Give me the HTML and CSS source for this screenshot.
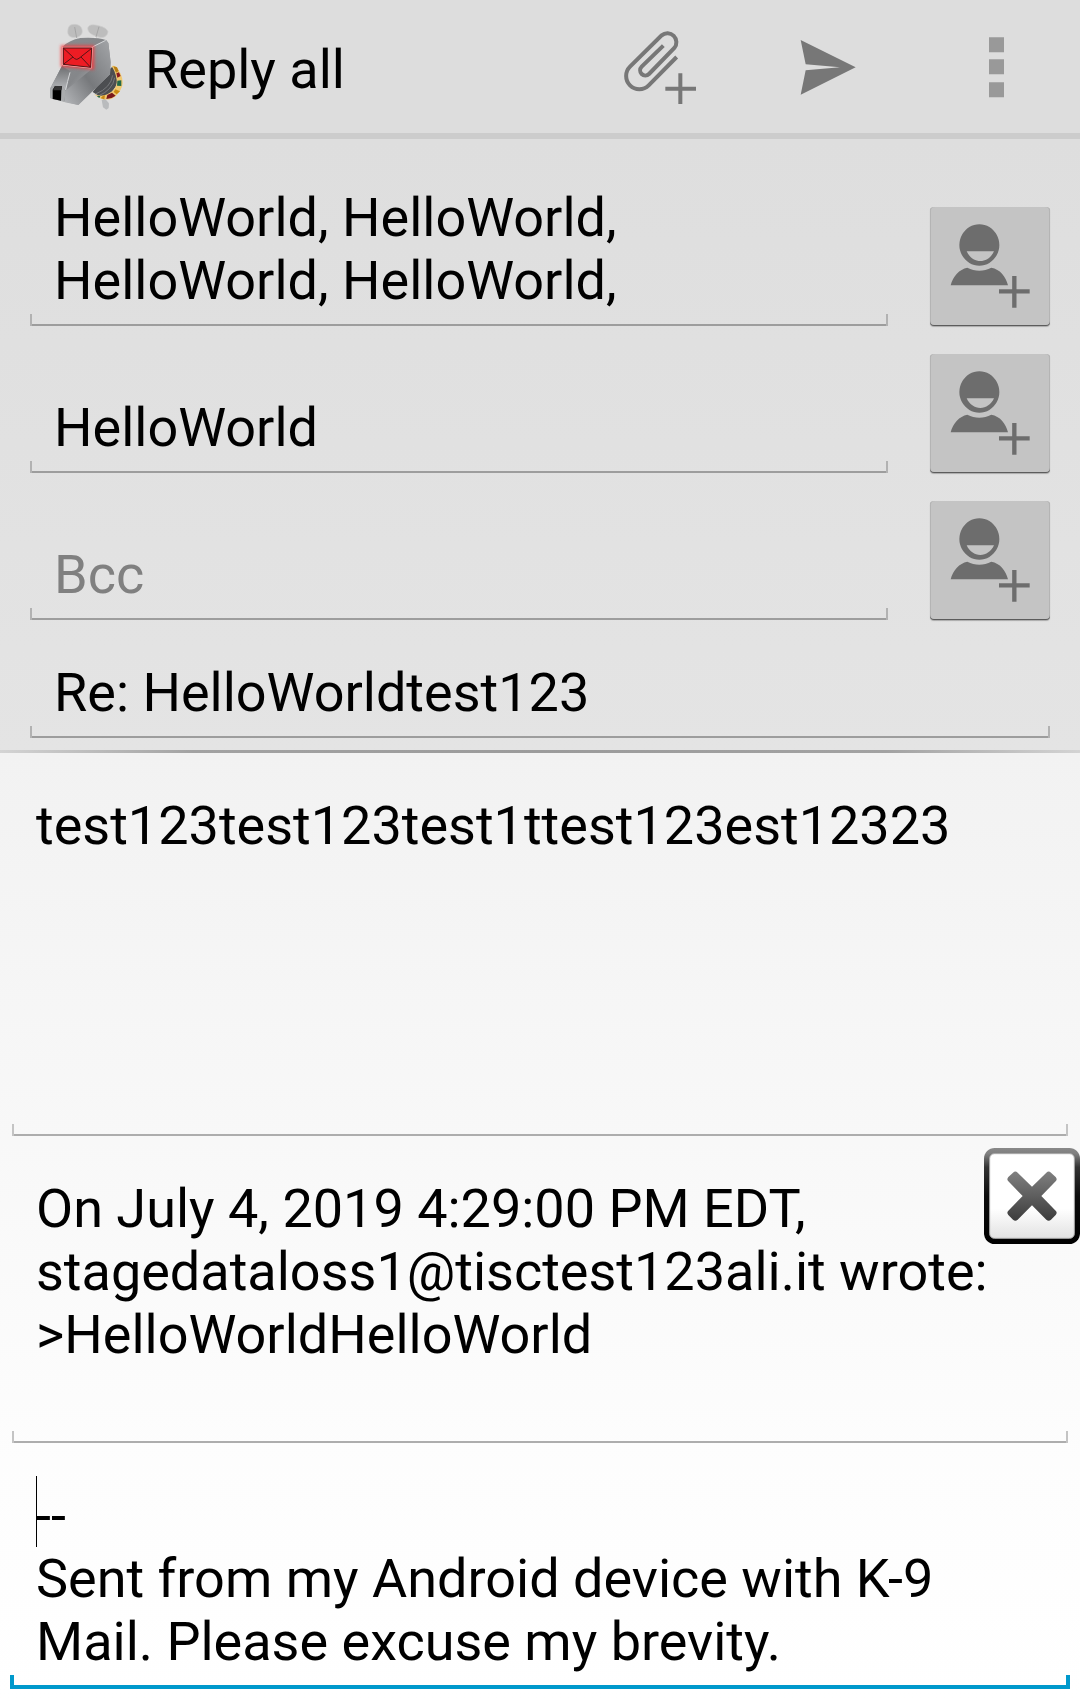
FILE: index.html
```html
<!DOCTYPE html>
<html lang="en">
<head>
<meta charset="utf-8">
<meta name="viewport" content="width=device-width, initial-scale=1">
<title>Reply all</title>
<link rel="stylesheet" href="styles.css">
</head>
<body>
<svg width="0" height="0" class="defs" aria-hidden="true">
  <symbol id="add-contact" viewBox="90 51 360 357">
    <path fill="#6d6d6d" fill-rule="evenodd" d="M238 103a60 62 0 1 0 .1 0zM200 184H282C274 202 258 213 241 213S208 202 200 184z"/>
    <path fill="#6d6d6d" d="M152 286C159 258 178 238 202 233C225 245 251 245 274 233C300 238 317 258 324 286z"/>
    <path stroke="#6d6d6d" stroke-width="13" fill="none" d="M297 304H389M343 258V353"/>
  </symbol>
</svg>
<header class="bar">
  <svg class="logo" viewBox="48 27 240 276" role="img" aria-label="K-9 Mail">
    <defs>
      <linearGradient id="head" x1="0" y1="0" x2="1" y2="1"><stop offset="0" stop-color="#8a8c8f"/><stop offset=".5" stop-color="#85878a"/><stop offset=".75" stop-color="#a6a8ab"/><stop offset="1" stop-color="#77797c"/></linearGradient>
      <linearGradient id="side" x1="0" y1="1" x2="1" y2="0"><stop offset="0" stop-color="#b4b6b9"/><stop offset=".45" stop-color="#77797c"/><stop offset="1" stop-color="#a4a6a9"/></linearGradient>
      <linearGradient id="snout" x1="0" y1="0" x2="0" y2="1"><stop offset="0" stop-color="#6c6e70"/><stop offset="1" stop-color="#b8babd"/></linearGradient>
      <filter id="glow" x="-40%" y="-40%" width="180%" height="180%"><feGaussianBlur stdDeviation="5"/></filter>
    </defs>
    <g fill="#bdbdbd" stroke="#cfcfcf" stroke-width="2">
      <path d="M114 57C116 44 130 41 142 44C154 48 159 58 156 70C151 82 134 86 121 80C113 76 112 67 114 57z"/>
      <path d="M173 54C177 43 188 43 201 46C217 50 230 54 234 65C233 78 220 86 206 81C191 77 173 71 173 54z"/>
    </g>
    <path d="M134 51L142 94M207 50L193 98" stroke="#999" stroke-width="2" fill="none"/>
    <path d="M140 85V95M196 81L192 99" stroke="#eee" stroke-width="4"/>
    <path d="M215 270L225 266L237 280L236 294L229 299L219 292z" fill="#b9bbbd"/>
    <path d="M236 180L247 170Q264 190 262 215Q255 250 213 262L188 246z" fill="#4c4e51"/>
    <path d="M248 196Q243 233 197 252M254 203Q248 240 205 258" stroke="#8b8d90" stroke-width="2" fill="none"/>
    <path d="M245 168Q258 165 265 179Q283 205 276 230Q266 256 245 266Q218 275 192 253Q214 261 232 253Q255 242 260 222Q262 196 245 168z" fill="#f0c972"/>
    <path d="M250 169L261 172L266 183L258 188z" fill="#b87d13"/>
    <path d="M259 190L267 187L272 198L262 203z" fill="#8a1b20"/>
    <path d="M262 212L274 211L274 228L261 227z" fill="#22684a"/>
    <path d="M256 238L270 244L260 253L251 246z" fill="#c98a12"/>
    <path d="M246 248L257 257L245 264L229 267L232 255z" fill="#7a181c"/>
    <path d="M219 257L225 256L223 268L212 265z" fill="#c98a12"/>
    <path d="M203 257L211 258L208 264L201 259z" fill="#22684a"/>
    <path d="M98 110Q118 90 151 84Q200 81 228 90L235 99L242 157L240 193L145 285L60 264L61 235L97 166z" fill="url(#head)"/>
    <path d="M186 111L228 90L235 99L242 157L240 193L145 285L104 277L106 242L188 175z" fill="url(#side)"/>
    <path d="M61 235L96 168L120 184L107 241L97 229L74 227z" fill="url(#snout)"/>
    <path d="M120 187Q112 216 107 240M187 111L227 91" stroke="#d5d7d9" stroke-width="3" fill="none"/>
    <path d="M60 264L61 237L72 228L98 229L107 243L103 276z" fill="#aaacae"/>
    <path d="M68 267V239L75 228H96L94 241L93 272z" fill="#000"/>
    <path d="M75 228H96L94 241H69z" fill="#333"/>
    <path d="M92 106H193V179L92 170z" fill="#ff3038" opacity=".75" filter="url(#glow)"/>
    <path d="M98 112H187L184 174L98 165z" fill="#ed1c24" stroke="#ffb0b0" stroke-width="3"/>
    <path d="M100 114H185L182 172L100 163zL134 146Q140 151 147 145L185 115M100 163L129 141M182 172L153 141" fill="none" stroke="#551416" stroke-width="3"/>
  </svg>
  <h1 class="title">Reply all</h1>
  <nav class="actions" aria-label="Message actions">
    <button type="button" class="action" aria-label="Add attachment">
      <svg viewBox="60 50 240 240" fill="none" stroke="#777" stroke-width="12">
        <path d="M230 140L146 225A39 39 0 0 1 90 169L185 75A27 27 0 0 1 223 113L147 191A15 15 0 0 1 125 169L190 106"/>
        <path d="M196 235H288M241 189V281"/>
      </svg>
    </button>
    <button type="button" class="action" aria-label="Send">
      <svg viewBox="564 50 240 240">
        <path fill="#777" d="M602 89L767 171L602 253L617 180L720 171L617 162z"/>
      </svg>
    </button>
    <button type="button" class="action" aria-label="More options">
      <svg viewBox="1068 50 240 240">
        <path fill="#999" d="M1167 81h45v45h-45zM1167 147h45v45h-45zM1167 216h45v45h-45z"/>
      </svg>
    </button>
  </nav>
</header>
<main>
  <form class="compose">
    <section class="recipients">
      <div class="row">
        <textarea class="field" rows="2" aria-label="To" spellcheck="false">HelloWorld, HelloWorld, HelloWorld, HelloWorld,</textarea>
        <button type="button" class="contact" aria-label="Add To contact"><svg><use href="#add-contact"/></svg></button>
      </div>
      <div class="row">
        <input class="field" type="text" aria-label="Cc" value="HelloWorld">
        <button type="button" class="contact" aria-label="Add Cc contact"><svg><use href="#add-contact"/></svg></button>
      </div>
      <div class="row">
        <input class="field" type="text" aria-label="Bcc" placeholder="Bcc">
        <button type="button" class="contact" aria-label="Add Bcc contact"><svg><use href="#add-contact"/></svg></button>
      </div>
      <div class="row">
        <input class="field" type="text" aria-label="Subject" value="Re: HelloWorldtest123">
      </div>
    </section>
    <section class="content">
      <textarea class="field message" rows="5" aria-label="Message text" spellcheck="false">test123test123test1ttest123est12323</textarea>
      <div class="quote">
        <textarea class="field" rows="4" aria-label="Quoted text" spellcheck="false">On July 4, 2019 4:29:00 PM EDT, stagedataloss1@tisctest123ali.it wrote:
&gt;HelloWorldHelloWorld
</textarea>
        <button type="button" class="close" aria-label="Remove quoted text">
          <svg viewBox="72 114 288 288">
            <defs>
              <linearGradient id="frame" x1="0" y1="0" x2="0" y2="1"><stop offset="0" stop-color="#888"/><stop offset=".06" stop-color="#808080"/><stop offset=".2" stop-color="#333"/><stop offset=".5" stop-color="#0c0c0c"/><stop offset="1" stop-color="#000"/></linearGradient>
              <linearGradient id="face" x1="0" y1="0" x2="0" y2="1"><stop offset=".65" stop-color="#fff"/><stop offset="1" stop-color="#e2e2e2"/></linearGradient>
              <linearGradient id="cross" gradientUnits="userSpaceOnUse" x1="0" y1="184" x2="0" y2="332"><stop offset="0" stop-color="#808080"/><stop offset="1" stop-color="#3c3c3c"/></linearGradient>
            </defs>
            <rect x="72" y="114" width="288" height="288" rx="32" fill="url(#frame)"/>
            <rect x="89" y="131" width="254" height="254" rx="14" fill="url(#face)" stroke="#aaa" stroke-width="3"/>
            <path d="M159 188Q166 181 173 188L216 230L259 188Q266 181 273 188L287 201Q293 208 287 214L244 258L287 302Q293 308 287 315L273 329Q266 335 259 329L216 286L173 329Q166 335 159 329L145 315Q139 308 145 302L188 258L145 214Q139 208 145 201z" fill="url(#cross)"/>
          </svg>
        </button>
      </div>
      <div class="signature">
        <textarea class="field active" rows="3" aria-label="Signature" spellcheck="false">--
Sent from my Android device with K-9 Mail. Please excuse my brevity.</textarea>
        <span class="caret"></span>
      </div>
    </section>
  </form>
</main>
</body>
</html>
```
FILE: styles.css
```css
* {
  box-sizing: border-box;
}

body {
  margin: 0;
  background: #fff;
  color: #000;
  font-family: Roboto, sans-serif;
  font-size: 54px;
  line-height: 63px;
}

button {
  border: 0;
  padding: 0;
  background: none;
  cursor: pointer;
}

svg {
  display: block;
}

.defs {
  position: absolute;
}

.bar {
  display: flex;
  align-items: center;
  min-height: 139px;
  padding-left: 46px;
  background: #ddd;
  border-bottom: 6px solid #ccc;
}

.logo {
  flex: none;
  width: 80px;
  height: 92px;
  margin-bottom: 4px;
}

.title {
  flex: 1;
  margin: 0;
  padding: 6px 0 0 19px;
  font-size: 54px;
  font-weight: 400;
}

.actions {
  display: flex;
}

.action {
  display: flex;
  align-items: center;
  justify-content: center;
  width: 168px;
  height: 132px;
}

.action svg {
  width: 80px;
  height: 80px;
}

.recipients {
  display: flex;
  flex-direction: column;
  gap: 28px;
  padding: 34px 30px 12px;
  background: linear-gradient(#dedede, #e4e4e4);
}

/* The subject row has no button, so its own height sets the row. */
.row {
  display: flex;
  align-items: flex-end;
  gap: 42px;
}

/* Bracket underline: two end ticks and a line along the bottom edge. */
.field {
  --line: #9d9d9d;
  --tick: #b2b2b2;
  --thick: 2px;
  --rise: 12px;
  display: block;
  flex: 1;
  width: 100%;
  min-width: 0;
  margin: 0;
  padding: 13px 24px 14px;
  border: 0;
  border-radius: 0;
  outline: 0;
  resize: none;
  overflow: hidden;
  color: #000;
  font: inherit;
  background:
    linear-gradient(var(--tick), var(--tick)) left bottom / var(--thick) var(--rise) no-repeat,
    linear-gradient(var(--tick), var(--tick)) right bottom / var(--thick) var(--rise) no-repeat,
    linear-gradient(var(--line), var(--line)) left bottom / 100% var(--thick) no-repeat;
}

input.field {
  height: 90px;
}

.field::placeholder {
  color: #808080;
  opacity: 1;
}

.contact {
  flex: none;
  width: 120px;
  height: 119px;
  border-radius: 4px;
  background: #c4c4c4;
  box-shadow: inset 0 -1px 0 #5c5c5c, inset 1px 0 0 #b4b4b4, inset -1px 0 0 #b4b4b4, 0 1px 1px #aaa;
}

.contact svg {
  width: 100%;
  height: 100%;
}

.content {
  padding: 28px 12px 10px;
  border-top: 3px solid;
  border-image: linear-gradient(90deg, #d4d4d4, #a2a2a2 18%, #9b9b9b 50%, #a2a2a2 82%, #d4d4d4) 1;
  background: linear-gradient(#f2f2f2, #fdfdfd 75%, #fff);
}

.content .field {
  --line: #adadad;
  --tick: #c4c4c4;
}

.content .message {
  padding-bottom: 27px;
}

.quote {
  position: relative;
  margin: 28px 0;
}

.close {
  position: absolute;
  top: -16px;
  right: -12px;
  width: 96px;
  height: 96px;
}

.close svg {
  width: 96px;
  height: 96px;
}

.signature {
  position: relative;
  margin: 0 -2px;
}

.content .active {
  --line: #0099cc;
  --tick: #0099cc;
  --thick: 4px;
  --rise: 14px;
  padding: 13px 26px 16px;
}

.caret {
  position: absolute;
  top: 5px;
  left: 26px;
  width: 1px;
  height: 71px;
  background: #000;
}
```
